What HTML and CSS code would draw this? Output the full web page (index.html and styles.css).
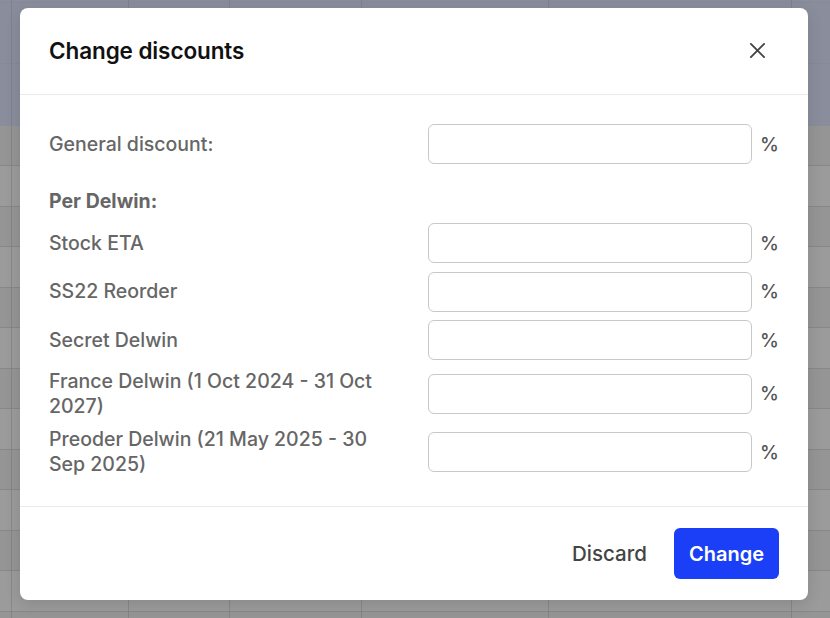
FILE: index.html
```html
<!DOCTYPE html>
<html>
<head>
<meta charset="utf-8">
<link rel="stylesheet" href="styles.css">
</head>
<body>
<div class="backdrop">
  <div class="band"></div>
  <div class="rows"></div>
  <div class="cols">
    <div class="col c1"></div>
    <div class="col c2"></div>
    <div class="col c3"></div>
    <div class="col c4"></div>
    <div class="col c5"></div>
    <div class="col c6"></div>
    <div class="col c7"></div>
  </div>
</div>
<div class="modal">
  <div class="modal-header">
    <h2 class="title">Change discounts</h2>
    <button class="close" aria-label="Close">
      <svg width="18" height="18" viewBox="0 0 18 18"><path d="M2 2 L16 16 M16 2 L2 16" stroke="#444" stroke-width="2" stroke-linecap="round" fill="none"/></svg>
    </button>
  </div>
  <div class="modal-body">
    <div class="row general">
      <label class="label">General discount:</label>
      <input class="field" type="text">
      <span class="pct">%</span>
    </div>
    <div class="section">Per Delwin:</div>
    <div class="list">
      <div class="row">
        <label class="label">Stock ETA</label>
        <input class="field" type="text">
        <span class="pct">%</span>
      </div>
      <div class="row">
        <label class="label">SS22 Reorder</label>
        <input class="field" type="text">
        <span class="pct">%</span>
      </div>
      <div class="row">
        <label class="label">Secret Delwin</label>
        <input class="field" type="text">
        <span class="pct">%</span>
      </div>
      <div class="row">
        <label class="label">France Delwin (1 Oct 2024 - 31 Oct 2027)</label>
        <input class="field" type="text">
        <span class="pct">%</span>
      </div>
      <div class="row">
        <label class="label">Preoder Delwin (21 May 2025 - 30 Sep 2025)</label>
        <input class="field" type="text">
        <span class="pct">%</span>
      </div>
    </div>
  </div>
  <div class="modal-footer">
    <button class="btn discard">Discard</button>
    <button class="btn primary">Change</button>
  </div>
</div>
</body>
</html>
```
FILE: styles.css
```css
* { box-sizing: border-box; }
html, body { margin: 0; padding: 0; }
body {
  width: 830px;
  height: 618px;
  overflow: hidden;
  font-family: Inter, "Noto Sans", sans-serif;
  background: #989898;
}
.backdrop {
  position: relative;
  width: 830px;
  height: 618px;
  display: flex;
  flex-direction: column;
}
.band {
  height: 126px;
  flex: none;
  background:
    linear-gradient(#858998, #858998) 0 63px / 100% 1px no-repeat,
    linear-gradient(#858998, #858998) 0 2px / 100% 1px no-repeat,
    #8a8e9c;
}
.rows {
  flex: 1;
  background:
    repeating-linear-gradient(
      to bottom,
      #959595 0px, #959595 39px,
      #888888 39px, #888888 40px,
      #9b9b9b 40px, #9b9b9b 80px,
      #888888 80px, #888888 81px
    );
}
.cols {
  position: absolute;
  inset: 0;
  display: flex;
}
.col { border-right: 1px solid rgba(120,120,120,0.55); height: 100%; flex: none; }
.c1 { width: 12px; }
.c2 { width: 117px; }
.c3 { width: 101px; }
.c4 { width: 132px; }
.c5 { width: 187px; }
.c6 { width: 243px; }
.c7 { flex: 1; border-right: none; }

.modal {
  position: absolute;
  left: 20px;
  top: 8px;
  width: 788px;
  height: 592px;
  background: #fff;
  border-radius: 8px;
  box-shadow: 0 4px 16px rgba(0,0,0,0.12);
  display: flex;
  flex-direction: column;
}
.modal-header {
  height: 87px;
  flex: none;
  display: flex;
  align-items: center;
  justify-content: space-between;
  padding: 0 38px 2px 29px;
  border-bottom: 1px solid #ebebeb;
}
.title {
  margin: 0;
  font-size: 22.5px;
  font-weight: 600;
  color: #111;
  letter-spacing: -0.1px;
}
.close {
  border: none;
  background: none;
  padding: 0;
  width: 26px;
  height: 26px;
  display: flex;
  align-items: center;
  justify-content: center;
  cursor: pointer;
}
.close svg { width: 17px; height: 17px; }
.modal-body {
  flex: 1;
  padding: 29px 29px 0 29px;
}
.row {
  display: grid;
  grid-template-columns: 345px 324px 1fr;
  column-gap: 34px;
  align-items: center;
  min-height: 40px;
}
.row .pct { margin-left: -26px; }
.general { margin-bottom: 25px; }
.label {
  font-size: 19.5px;
  line-height: 25px;
  color: #666;
  font-weight: 500;
}
.section {
  font-size: 19.5px;
  line-height: 25px;
  font-weight: 700;
  color: #666;
  margin-bottom: 9px;
}
.list {
  display: flex;
  flex-direction: column;
  gap: 8.5px;
}
.field {
  height: 40px;
  width: 324px;
  border: 1px solid #c8c8c8;
  border-radius: 6px;
  background: #fff;
  font: inherit;
  padding: 0 12px;
}
.pct {
  font-size: 19px;
  color: #555;
  font-weight: 500;
}
.modal-footer {
  height: 94px;
  flex: none;
  border-top: 1px solid #ebebeb;
  display: flex;
  align-items: center;
  justify-content: flex-end;
  gap: 12px;
  padding: 0 29px 0 0;
}
.btn {
  font-family: Inter, "Noto Sans", sans-serif;
  font-size: 20.5px;
  font-weight: 500;
  height: 51px;
  padding: 0 15px;
  border-radius: 6px;
  border: none;
  cursor: pointer;
}
.discard { background: none; color: #444; }
.primary { background: #1a3ff6; color: #fff; font-weight: 600; font-size: 20px; }
```
